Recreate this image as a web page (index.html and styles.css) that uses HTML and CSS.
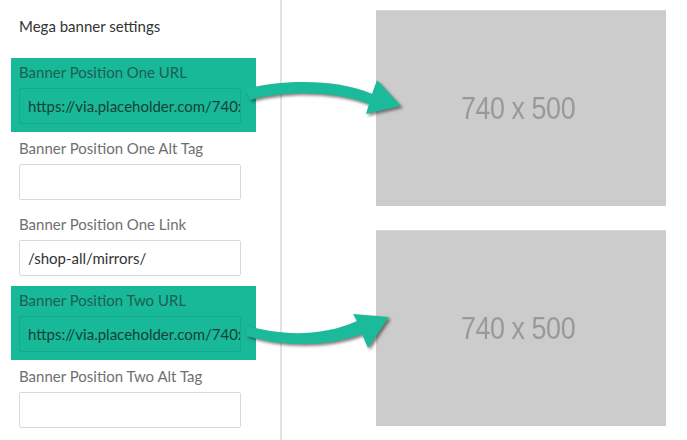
FILE: index.html
```html
<!DOCTYPE html>
<html lang="en">
<head>
    <meta charset="UTF-8">
    <title>Mega banner settings</title>
    <link rel="stylesheet" href="styles.css">
</head>
<body>
<div class="page">
    <div class="sidebar">
        <h2 class="title">Mega banner settings</h2>
        <div class="field highlight">
            <label>Banner Position One URL</label>
            <input type="text" value="https://via.placeholder.com/740x500">
        </div>
        <div class="field">
            <label>Banner Position One Alt Tag</label>
            <input type="text" value="">
        </div>
        <div class="field">
            <label>Banner Position One Link</label>
            <input type="text" value="/shop-all/mirrors/">
        </div>
        <div class="field highlight">
            <label>Banner Position Two URL</label>
            <input type="text" value="https://via.placeholder.com/740x500">
        </div>
        <div class="field">
            <label>Banner Position Two Alt Tag</label>
            <input type="text" value="">
        </div>
    </div>
    <div class="preview">
        <div class="placeholder"><span>740 x 500</span></div>
        <div class="placeholder"><span>740 x 500</span></div>
    </div>
</div>
<svg class="arrows" width="687" height="440" viewBox="0 0 687 440">
    <path d="M245 89 C 280 80, 335 78, 372 94 L 377 80 L 401 106 L 366 114 L 369 104 C 330 90, 285 91, 250 100 Z"/>
    <path d="M245 325 C 275 335, 320 338, 357 321 L 353 314 L 389 317 L 368 348 L 362 334 C 325 348, 280 346, 247 336 Z"/>
</svg>
</body>
</html>
```

FILE: styles.css
```css
* {
    margin: 0;
    padding: 0;
    box-sizing: border-box;
}

body {
    font-family: Lato, "Noto Sans", sans-serif;
    background: #fff;
    overflow: hidden;
}

.page {
    display: flex;
    height: 440px;
}

.sidebar {
    width: 282px;
    padding-top: 16px;
    border-right: 2px solid #e2e2e2;
}

.title {
    font-size: 15px;
    font-weight: normal;
    line-height: 20px;
    color: #333;
    padding-left: 19px;
    margin-bottom: 22px;
}

.field {
    display: flex;
    flex-direction: column;
    margin: 0 24px 2px 11px;
    padding: 4px 15px 8px 8px;
}

.field label {
    font-size: 15px;
    line-height: 20px;
    color: #707070;
    margin-bottom: 6px;
}

.field input {
    height: 36px;
    padding: 0 0 0 8px;
    font-family: inherit;
    font-size: 15px;
    color: #333;
    background: #fff;
    border: 1px solid #d9d9d9;
    border-radius: 2px;
    outline: none;
}

.field.highlight {
    background: #17b999;
}

.field.highlight label {
    color: #1e5f51;
}

.field.highlight input {
    background: transparent;
    border-color: rgba(0, 0, 0, 0.08);
    color: #173f37;
}

.preview {
    flex: 1;
    padding: 10px 0 0 94px;
    display: flex;
    flex-direction: column;
    gap: 24px;
}

.placeholder {
    width: 290px;
    height: 196px;
    padding-right: 6px;
    background: #cccccc;
    border-top: 1px solid #d9d9d9;
    display: flex;
    align-items: center;
    justify-content: center;
    font-family: "Liberation Sans", Arial, sans-serif;
    font-size: 32px;
    color: #999;
}

.placeholder span {
    display: inline-block;
    transform: scaleX(0.84);
    letter-spacing: -0.5px;
}

.arrows {
    position: absolute;
    top: 0;
    left: 0;
    fill: #1bba9b;
    filter: drop-shadow(2px 2px 1.5px rgba(40, 20, 20, 0.55));
}
```
